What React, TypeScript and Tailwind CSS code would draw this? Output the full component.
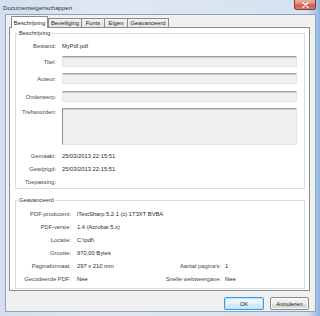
import React from "react";

const labelCls = "text-[#474747]";
const valueCls = "text-[#2a2a2a]";

function Input({ h = 11 }: { h?: number }) {
  return (
    <div
      className={`flex-1 bg-[#f0f0f0] border border-[#e4e4e4] border-t-[#9f9f9f] shadow-[inset_0_1px_0_#cdcdcd] ${
        h === 11 ? "h-[11px]" : "h-[37px] border-l-[#8f8f8f]"
      }`}
    />
  );
}

function Group({ title, className, children }: { title: string; className: string; children: React.ReactNode }) {
  return (
    <div className={`relative border border-[#d5dfe5] ${className}`}>
      <span className="absolute left-[2px] -top-[4px] bg-white px-[1px] leading-[7px] text-[#303030]">{title}</span>
      {children}
    </div>
  );
}

function Row1({ label, children, h }: { label: string; children?: React.ReactNode; h: string }) {
  return (
    <div className={`flex items-center gap-[6px] ${h}`}>
      <span className={`w-[40px] shrink-0 text-right ${labelCls}`}>{label}</span>
      {children}
    </div>
  );
}

function Row2({ label, value }: { label: string; value: string }) {
  return (
    <div className="flex items-center h-[13px]">
      <span className={`w-[55px] shrink-0 text-right ${labelCls}`}>{label}</span>
      <span className={`ml-[6px] ${valueCls}`}>{value}</span>
    </div>
  );
}

function Row2b({ l1, v1, l2, v2 }: { l1: string; v1: string; l2: string; v2: string }) {
  return (
    <div className="flex items-center h-[13px]">
      <span className={`w-[55px] shrink-0 text-right ${labelCls}`}>{l1}</span>
      <span className={`ml-[6px] w-[85px] shrink-0 ${valueCls}`}>{v1}</span>
      <span className={`w-[59px] shrink-0 text-right whitespace-nowrap ${labelCls}`}>{l2}</span>
      <span className={`ml-[4px] ${valueCls}`}>{v2}</span>
    </div>
  );
}

export default function App() {
  const tabs = [
    { t: "Beveiliging", w: "w-[34px]", ml: "" },
    { t: "Fonts", w: "w-[24px]", ml: "-ml-px" },
    { t: "Eigen", w: "w-[24px]", ml: "-ml-px" },
    { t: "Geavanceerd", w: "w-[42px]", ml: "-ml-px" },
  ];
  return (
    <div className="w-[320px] h-[316px] flex flex-col font-['Liberation_Sans',Arial,sans-serif] text-[5.8px] leading-[8px] bg-[linear-gradient(90deg,#d3dfee_0%,#dfe8f3_30%,#d6e2f0_96%,#aac8ec_98.5%,#8eb2df_100%)]">
      {/* Title bar */}
      <div className="h-[14px] flex items-start justify-between shrink-0">
        <span className="pl-[3px] pt-[4px] text-[6.1px] leading-[7px] text-[#333333]">Documenteigenschappen</span>
        <div className="mr-[4px] w-[22px] h-[10px] rounded-b-[3px] border border-t-0 border-[#8a3a30] bg-[linear-gradient(180deg,#e9b0a3_0%,#db8675_45%,#c75b48_55%,#d9806a_100%)] flex items-center justify-center">
          <svg width="7" height="6" viewBox="0 0 7 6">
            <path d="M1 0.8 L6 5.2 M6 0.8 L1 5.2" stroke="#ffffff" strokeWidth="1.3" strokeLinecap="round" />
          </svg>
        </div>
      </div>
      {/* Client area */}
      <div className="ml-[5px] mr-[4px] mb-[4px] h-[298px] border border-[#8fa4c2] bg-[#f0f0f0] flex flex-col pt-[1px] pl-[3px] pr-[5px]">
        {/* Tabs */}
        <div className="flex items-end h-[11px] pl-[2px] relative z-10 shrink-0">
          <div className="w-[37px] h-[12px] -mb-px border border-b-0 border-[#898c95] bg-white flex items-center justify-center text-[#1e1e1e] rounded-t-[1px]">
            Beschrijving
          </div>
          {tabs.map((tb) => (
            <div
              key={tb.t}
              className={`${tb.w} ${tb.ml} h-[9px] border border-b-0 border-[#898c95] bg-[linear-gradient(180deg,#f3f3f3,#e3e3e3)] flex items-center justify-center text-[#1e1e1e]`}
            >
              {tb.t}
            </div>
          ))}
        </div>
        {/* Panel */}
        <div className="h-[264px] shrink-0 border border-[#898c95] bg-white pt-[5px] pl-[5px] pr-[4px]">
          <Group title="Beschrijving" className="pt-[7px] pr-[7px]">
            <Row1 label="Bestand:" h="h-[10px]">
              <span className={valueCls}>MyPdf.pdf</span>
            </Row1>
            <div className="mt-[5px]">
              <Row1 label="Titel:" h="h-[11px]">
                <Input />
              </Row1>
            </div>
            <div className="mt-[6px]">
              <Row1 label="Auteur:" h="h-[11px]">
                <Input />
              </Row1>
            </div>
            <div className="mt-[7px]">
              <Row1 label="Onderwerp:" h="h-[11px]">
                <Input />
              </Row1>
            </div>
            <div className="mt-[6px] flex items-start gap-[6px] h-[37px]">
              <span className={`w-[40px] shrink-0 text-right ${labelCls}`}>Trefwoorden:</span>
              <Input h={37} />
            </div>
            <div className="mt-[5px]">
              <Row1 label="Gemaakt:" h="h-[12px]">
                <span className={valueCls}>25/03/2013 22:15:51</span>
              </Row1>
            </div>
            <Row1 label="Gewijzigd:" h="h-[13px]">
              <span className={valueCls}>25/03/2013 22:15:51</span>
            </Row1>
            <Row1 label="Toepassing:" h="h-[13px]" />
          </Group>
          <Group title="Geavanceerd" className="mt-[11px] pt-[6px] pb-[3px]">
            <Row2 label="PDF-producent:" value="iTextSharp 5.2.1 (c) 1T3XT BVBA" />
            <Row2 label="PDF-versie:" value="1.4 (Acrobat 5.x)" />
            <Row2 label="Locatie:" value="C:\pdf\" />
            <Row2 label="Grootte:" value="970,00 Bytes" />
            <Row2b l1="Paginaformaat:" v1="297 x 210 mm" l2="Aantal pagina's:" v2="1" />
            <Row2b l1="Gecodeerde PDF:" v1="Nee" l2="Snelle webweergave:" v2="Nee" />
          </Group>
        </div>
        {/* Buttons */}
        <div className="mt-[6px] flex justify-end gap-[6px] pr-[1px]">
          <div className="w-[40px] h-[13px] rounded-[2px] border border-[#3c9ae0] bg-[linear-gradient(180deg,#f4f9fd_0%,#e9f3fb_50%,#d9ebf8_51%,#cfe6f7_100%)] shadow-[inset_0_0_0_1px_#bfe3fb] flex items-center justify-center text-[#1e1e1e]">
            OK
          </div>
          <div className="w-[39px] h-[13px] rounded-[2px] border border-[#8a8a8a] bg-[linear-gradient(180deg,#f4f4f4_0%,#ececec_50%,#dfdfdf_51%,#d6d6d6_100%)] shadow-[inset_0_0_0_1px_#fafafa] flex items-center justify-center text-[#1e1e1e]">
            Annuleren
          </div>
        </div>
      </div>
    </div>
  );
}
